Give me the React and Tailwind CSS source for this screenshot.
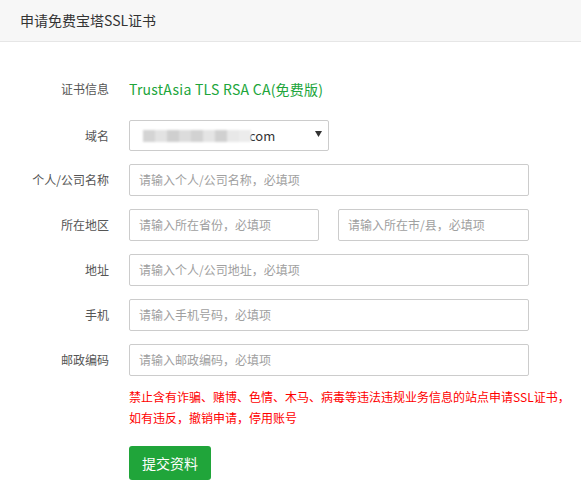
import React from "react";

const font = { fontFamily: '"Noto Sans CJK SC", "Noto Sans", sans-serif' };

function Row({ label, children, className = "" }) {
  return (
    <div className={"flex items-center " + className}>
      <div className="w-[109px] shrink-0 text-right text-[12px] text-[#555]">{label}</div>
      <div className="ml-[20px] flex items-center">{children}</div>
    </div>
  );
}

function Input({ placeholder, w = "w-[400px]" }) {
  return (
    <div className={"h-[32px] " + w + " flex items-center rounded-[2px] border border-[#ccc] bg-white pl-[9px] text-[12px] text-[#a0a0a0]"}>
      {placeholder}
    </div>
  );
}

export default function App() {
  const blur = ["#d4d4d4", "#e2e2e2", "#cfcfcf", "#dcdcdc", "#d2d2d2", "#e4e4e4", "#d0d0d0", "#e8e8e8", "#ececec"];
  return (
    <div className="w-[581px] h-[494px] bg-white overflow-hidden" style={font}>
      <div className="h-[42px] bg-[#f7f7f7] border-b border-[#e6e6e6] flex items-center pl-[20px] text-[14px] text-[#333]">
        申请免费宝塔SSL证书
      </div>
      <div className="pt-[32px]">
        <Row label="证书信息" className="h-[30px]">
          <span className="text-[14px] tracking-[0.25px] text-[#20a53a]">TrustAsia TLS RSA CA(免费版)</span>
        </Row>
        <Row label="域名" className="mt-[16px]">
          <div className="relative h-[31px] w-[200px] flex items-center rounded-[2px] border border-[#ccc] bg-white pl-[13px] text-[13px] text-[#333]">
            <div className="flex h-[12px] blur-[1px]">
              {blur.map((c, i) => (
                <div key={i} className="h-[12px] w-[12px]" style={{ background: c }} />
              ))}
            </div>
            <span className="ml-[-2px]">com</span>
            <svg className="absolute right-[6px] top-[10px]" width="7" height="6" viewBox="0 0 7 6">
              <path d="M0 0 L7 0 L3.5 6 Z" fill="#333" />
            </svg>
          </div>
        </Row>
        <Row label="个人/公司名称" className="mt-[13px]">
          <Input placeholder="请输入个人/公司名称，必填项" />
        </Row>
        <Row label="所在地区" className="mt-[13px]">
          <Input placeholder="请输入所在省份，必填项" w="w-[190px]" />
          <div className="ml-[19px]">
            <Input placeholder="请输入所在市/县，必填项" w="w-[191px]" />
          </div>
        </Row>
        <Row label="地址" className="mt-[13px]">
          <Input placeholder="请输入个人/公司地址，必填项" />
        </Row>
        <Row label="手机" className="mt-[13px]">
          <Input placeholder="请输入手机号码，必填项" />
        </Row>
        <Row label="邮政编码" className="mt-[13px]">
          <Input placeholder="请输入邮政编码，必填项" />
        </Row>
        <div className="ml-[129px] mt-[10px] text-[12px] leading-[21px] text-[#ff0000]">
          禁止含有诈骗、赌博、色情、木马、病毒等违法违规业务信息的站点申请SSL证书，
          <br />
          如有违反，撤销申请，停用账号
        </div>
        <div className="ml-[129px] mt-[18px]">
          <button className="h-[34px] w-[82px] rounded-[3px] bg-[#20a53a] text-[14px] text-white">提交资料</button>
        </div>
      </div>
    </div>
  );
}
